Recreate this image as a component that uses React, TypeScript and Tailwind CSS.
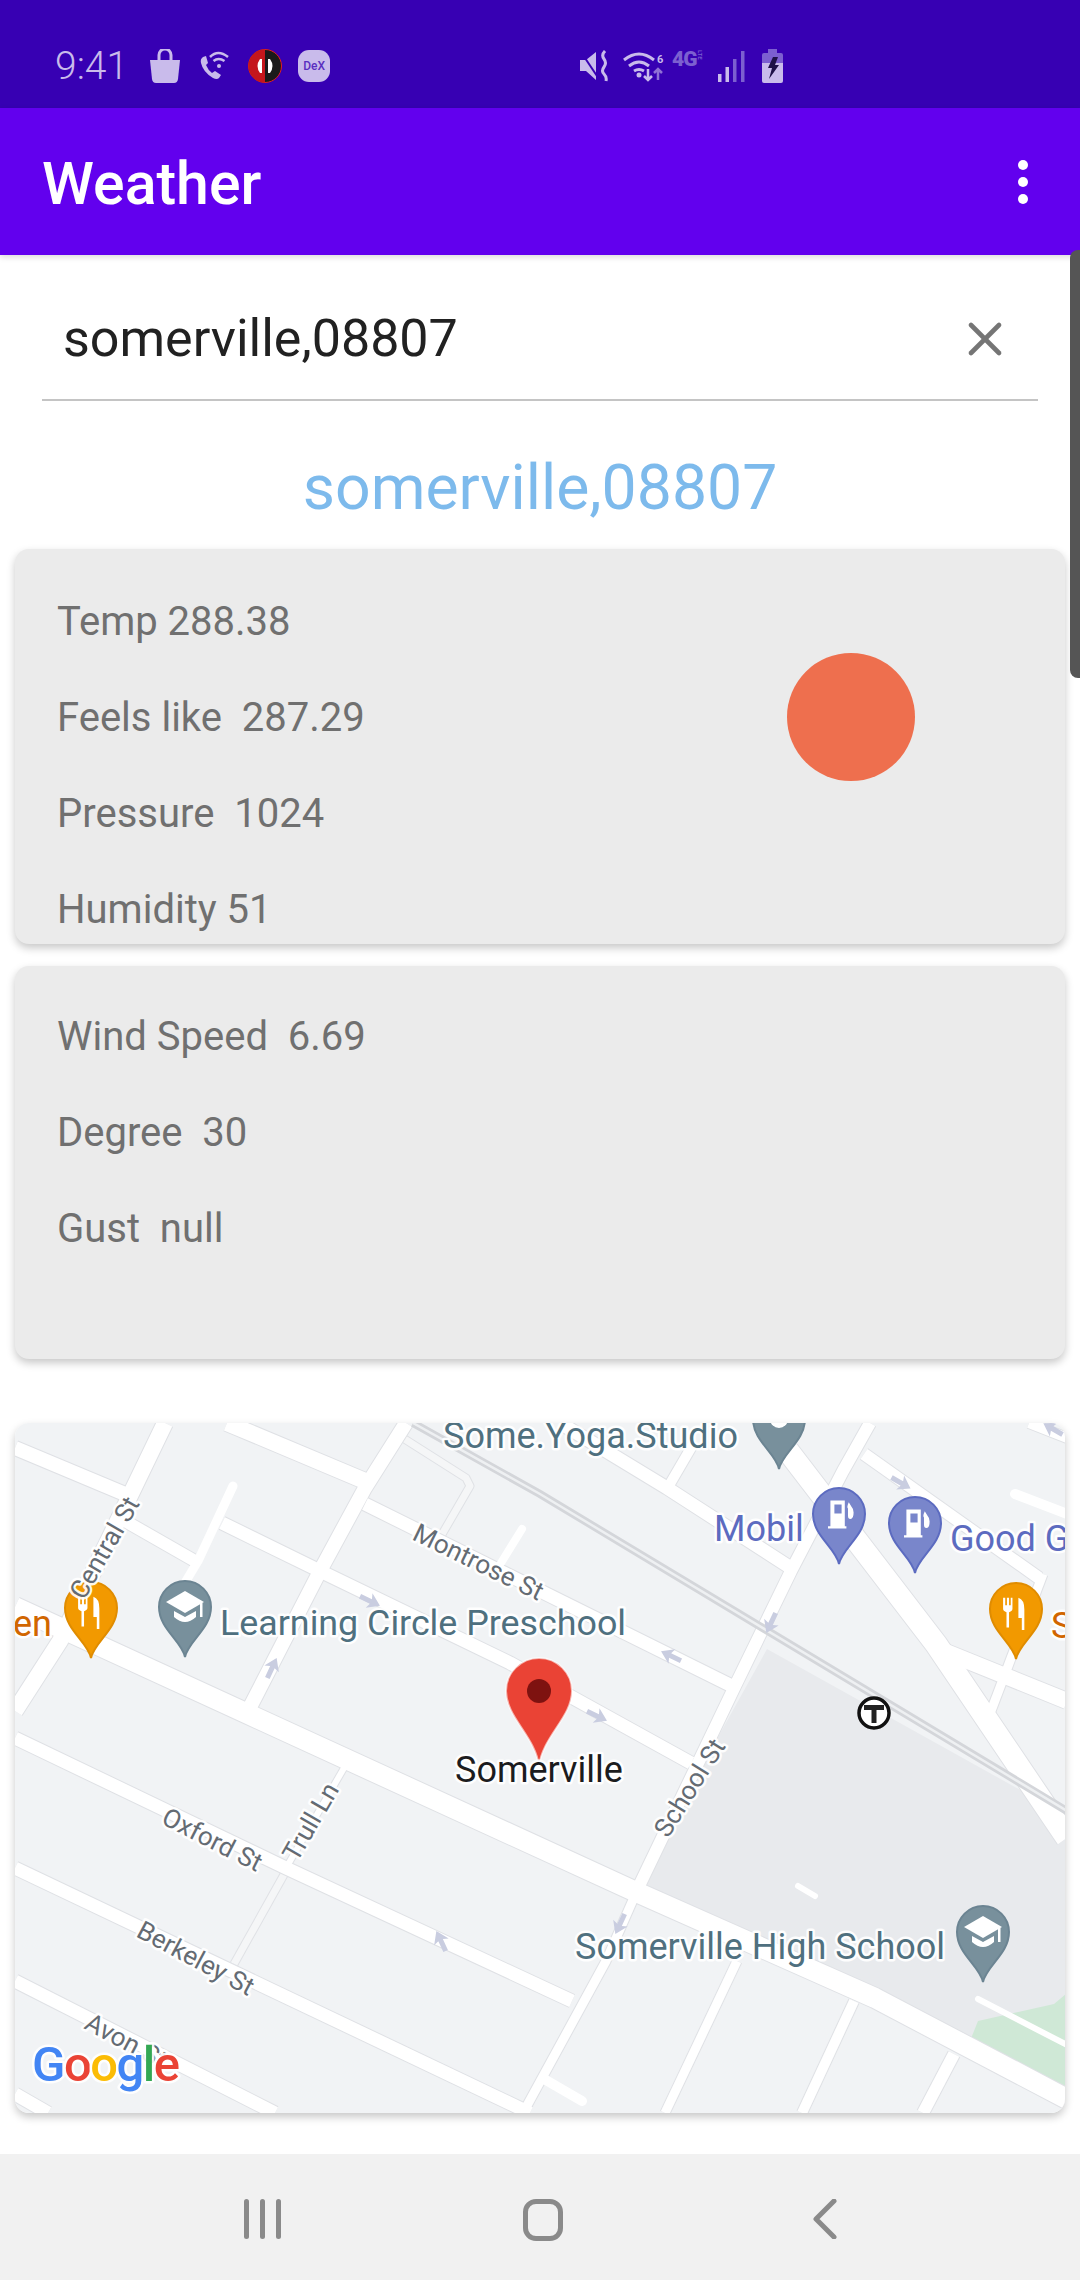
import { X } from 'lucide-react'

const halo = 'fill-current [paint-order:stroke] stroke-white/90 [stroke-width:5px] [stroke-linejoin:round]'

// [width, points] in page coordinates
const roads: [number, string][] = [
  [14, '15,1447 125,1493'],
  [12, '125,1520 195,1560'],
  [16, '165,1422 60,1640 15,1710'],
  [13, '222,1522 320,1570 510,1662 691,1762'],
  [16, '227,1422 365,1480'],
  [13, '365,1503 736,1687'],
  [13, '560,1422 667,1487 791,1567'],
  [14, '406,1422 365,1487 320,1570 248,1710'],
  [6, '344,1767 286,1867'],
  [12, '870,1422 843,1470 791,1570 736,1683 640,1883'],
  [9, '640,1883 606,1960 523,2112'],
  [13, '15,1737 286,1867 572,2000'],
  [13, '15,1867 530,2112'],
  [13, '15,1980 275,2112'],
  [13, '15,2093 48,2112'],
  [20, '15,1606 248,1713 634,1890 875,1997 1067,2098'],
  [10, '854,2000 802,2112'],
  [12, '954,2053 923,2112'],
  [9, '737,1960 665,2112'],
  [22, '788,1450 936,1643 1067,1837'],
  [16, '936,1647 1067,1700'],
  [12, '864,1453 1039,1577'],
  [9, '1043,1573 991,1710'],
  [10, '667,1488 695,1440'],
  [10, '1029,1422 1067,1437'],
]

const stubs: [number, string][] = [
  [9, '233,1485 198,1560 186,1580'],
  [8, '501,1562 522,1528'],
  [10, '544,2078 582,2100'],
  [10, '1015,1493 1067,1513'],
  [6, '798,1885 815,1895'],
  [6, '978,1998 1067,2044'],
]

// service paths: outlined, barely lighter than the ground
const paths: string[] = ['403,1437 466,1477 470,1485 441,1535', '286,1870 234,1963']

// [x, y, angle]
const arrows: [number, number, number][] = [
  [272, 1667, 25],
  [370, 1600, 115],
  [901, 1482, 120],
  [771, 1622, 205],
  [671, 1655, 295],
  [597, 1715, 115],
  [1053, 1428, 300],
  [620, 1923, 205],
  [441, 1940, 335],
]

const streets: [string, number, number, number][] = [
  ['Central St', 84, 1600, -60],
  ['Montrose St', 411, 1538, 26],
  ['Oxford St', 160, 1822, 27],
  ['Trull Ln', 297, 1862, -60],
  ['School St', 668, 1838, -58],
  ['Berkeley St', 135, 1935, 28],
  ['Avon St', 83, 2027, 28],
]

function Pin({ x, tip, color, edge, children }: { x: number; tip: number; color: string; edge: string; children: React.ReactNode }) {
  return (
    <g transform={`translate(${x} ${tip})`}>
      <path d="M0 0C-3-16-26-28-26-50A26 26 0 1 1 26-50C26-28 3-16 0 0Z" fill={color} stroke={edge} strokeWidth="2" />
      {children}
    </g>
  )
}

function SchoolGlyph() {
  return (
    <g fill="#fff">
      <path d="M0-66L19-55 0-44-19-55Z" />
      <path d="M-11-46L0-40 11-46V-40Q0-30-11-40Z" />
      <rect x="15" y="-54" width="2.5" height="14" />
    </g>
  )
}

function FoodGlyph() {
  return (
    <g fill="#fff" transform="translate(-1 -46) scale(.85) translate(0 46)">
      <path d="M-14-64h2.5v9h2v-9h2.5v9h2v-9H-3v13q0 3-4 4v18h-3v-18q-4-1-4-4Z" />
      <path d="M4-64q7 2 7 14v24H8v-14H4Z" />
    </g>
  )
}

function FuelGlyph() {
  return (
    <g fill="#fff" transform="translate(1 -49) scale(.8) translate(0 50)">
      <path fillRule="evenodd" d="M-12-68H6v32h2v3h-23v-3h3ZM-7-63v11H2v-11Z" />
      <path d="M11-66l3 5q3 3 3 8 0 8-4 8-3 0-3-4v-9q-2-2 1-8Z" />
    </g>
  )
}

function MapDrawing() {
  return (
    <svg viewBox="15 1422 1050 690" className="block h-full w-full font-[Roboto,sans-serif]">
      <rect x="15" y="1422" width="1050" height="690" fill="#f1f3f5" />
      <path d="M767 1648L1067 1815V2000L968 2045 875 1997 634 1887Z" fill="#e8eaed" />
      <path d="M978 2020L1054 2003 1067 1992V2094L968 2045Z" fill="#cfe8d6" />

      <g fill="none" strokeLinejoin="round">
        {paths.map((pts) => (
          <polyline key={pts} points={pts} stroke="#dfe1e5" strokeWidth="9" />
        ))}
        {paths.map((pts) => (
          <polyline key={pts} points={pts} stroke="#f5f6f7" strokeWidth="7" />
        ))}
      </g>
      <g fill="none" strokeLinecap="butt" strokeLinejoin="round">
        {roads.map(([w, pts]) => (
          <polyline key={pts} points={pts} stroke="#dfe1e5" strokeWidth={w + 2} />
        ))}
      </g>
      <g fill="none" strokeLinecap="butt" strokeLinejoin="round">
        {roads.map(([w, pts]) => (
          <polyline key={pts} points={pts} stroke="#fff" strokeWidth={w} />
        ))}
      </g>
      <g fill="none" strokeLinecap="round" strokeLinejoin="round" stroke="#fff">
        {stubs.map(([w, pts]) => (
          <polyline key={pts} points={pts} strokeWidth={w} />
        ))}
      </g>

      <polyline points="413,1422 540,1493 1067,1810" fill="none" stroke="#d4d6da" strokeWidth="8" />
      <polyline points="413,1422 540,1493 1067,1810" fill="none" stroke="#eef0f2" strokeWidth="2.5" />

      {arrows.map(([x, y, a]) => (
        <path
          key={`${x}-${y}`}
          transform={`translate(${x} ${y}) rotate(${a})`}
          d="M0-11L8 1 2.5-1V11H-2.5V-1L-8 1Z"
          fill="#c9cde0"
        />
      ))}

      <text x="443" y="1447" fontSize="36" className={`${halo} text-[#4f707f]`}>Some.Yoga.Studio</text>
      <text x="220" y="1634" fontSize="35.800" className={`${halo} text-[#4f707f]`}>Learning Circle Preschool</text>
      <text x="575" y="1958" fontSize="36" className={`${halo} text-[#4f707f]`}>Somerville High School</text>
      <text x="714" y="1540" fontSize="36" className={`${halo} text-[#5c6bc0]`}>Mobil</text>
      <text x="950" y="1550" fontSize="36" className={`${halo} text-[#5c6bc0]`}>Good G</text>
      <text x="1051" y="1637" fontSize="36" className={`${halo} text-[#d16600]`}>S</text>
      <text x="13" y="1635" fontSize="36" className={`${halo} text-[#d16600]`}>en</text>

      <Pin x={779} tip={1468} color="#78909c" edge="#6b8492"><circle cy="-50" r="9" fill="#fff" /></Pin>
      <Pin x={839} tip={1563} color="#7986cb" edge="#5c6bc0"><FuelGlyph /></Pin>
      <Pin x={915} tip={1572} color="#7986cb" edge="#5c6bc0"><FuelGlyph /></Pin>
      <Pin x={1016} tip={1658} color="#f29900" edge="#e08c00"><FoodGlyph /></Pin>
      <Pin x={91} tip={1657} color="#f29900" edge="#e08c00"><FoodGlyph /></Pin>
      <Pin x={185} tip={1656} color="#78909c" edge="#6b8492"><SchoolGlyph /></Pin>
      <Pin x={983} tip={1981} color="#78909c" edge="#6b8492"><SchoolGlyph /></Pin>

      {/* T station */}
      <circle cx="874" cy="1712" r="15" fill="#fff" stroke="#111" strokeWidth="3.5" />
      <path d="M864 1704h20v5h-7.5v13h-5v-13H864Z" fill="#222" />

      {/* selected marker */}
      <path
        d="M539 1765C535 1735 506 1716 506 1690A33 33 0 1 1 572 1690C572 1716 543 1735 539 1765Z"
        fill="#ea4335"
        stroke="#fff"
        strokeOpacity=".6"
        strokeWidth="2"
      />
      <circle cx="539" cy="1690" r="12" fill="#7e1210" />
      <text x="455" y="1781" fontSize="36" className={`${halo} text-[#1c1c1e]`}>Somerville</text>

      {/* street names sit over the pins, the logo over the street names */}
      {streets.map(([name, x, y, a]) => (
        <text
          key={name}
          transform={`translate(${x} ${y}) rotate(${a})`}
          fontSize="26"
          className={`${halo} text-[#646b73]`}
        >
          {name}
        </text>
      ))}

      <text x="32" y="2080" fontSize="49" fontWeight="500" letterSpacing="-1.500" className="[paint-order:stroke] stroke-white/90 [stroke-width:5px] [stroke-linejoin:round]">
        <tspan fill="#4285f4">G</tspan>
        <tspan fill="#ea4335">o</tspan>
        <tspan fill="#fbbc05">o</tspan>
        <tspan fill="#4285f4">g</tspan>
        <tspan fill="#34a853">l</tspan>
        <tspan fill="#ea4335">e</tspan>
      </text>
    </svg>
  )
}

function StatusBar() {
  return (
    <div className="flex h-[108px] shrink-0 items-center bg-[#3700b3] pl-[55px] pr-[297px] pt-[24px] text-[#c9bbeb]">
      <span className="text-[39px] font-light leading-none">9:41</span>
      <svg viewBox="0 0 30 34" className="ml-[22px] h-[34px] w-[30px]" fill="currentColor">
        <path d="M0 11h30l-2 19q-.5 4-4 4H6q-3.500 0-4-4Z" />
        <path d="M9 13V6a6 6 0 0 1 12 0v7" fill="none" stroke="currentColor" strokeWidth="3" />
      </svg>
      <svg viewBox="0 0 30 30" className="ml-[19px] h-[30px] w-[30px]" fill="none" stroke="currentColor">
        <path d="M4 6q-3 2-2 6 2 9 12 15 4 2 6 0l2-3-6-4-3 2q-4-3-6-8l2-2-2-7Z" fill="currentColor" stroke="none" />
        <path d="M11 6q8-8 18 0M14.500 10q5-4 11 0" strokeWidth="2.500" />
        <circle cx="20" cy="15" r="2" fill="currentColor" stroke="none" />
      </svg>
      <svg viewBox="0 0 34 34" className="ml-[19px] h-[34px] w-[34px]">
        <circle cx="17" cy="17" r="16.500" fill="#1a1a1a" stroke="#e02020" />
        <path d="M17 .5A16.500 16.500 0 0 0 17 33.500Z" fill="#c4161c" />
        <path d="M12 10q-5 7 0 14h2V10ZM22 10q5 7 0 14h-2V10Z" fill="#fff" />
      </svg>
      <div className="ml-[16px] flex h-[32px] w-[32px] items-center justify-center rounded-[11px] bg-current">
        <span className="text-[12px] font-medium leading-none text-[#5a2fc0]">DeX</span>
      </div>

      <div className="ml-auto flex items-center">
        <svg viewBox="0 0 32 32" className="h-[32px] w-[32px]" fill="currentColor">
          <path d="M0 10h6l10-8v28L6 21H0Z" />
          <path d="M1 2L19 29" stroke="#3700b3" strokeWidth="2" />
          <path d="M25 1q-4 4-1 8t0 8 0 7 2 7M30 1" fill="none" stroke="currentColor" strokeWidth="3" />
        </svg>
        <svg viewBox="0 0 42 32" className="ml-[11px] h-[32px] w-[42px]" fill="none" stroke="currentColor">
          <path d="M1 10q15-12 30 0M6 16q10-8 20 0M11 21q5-3 10 0" strokeWidth="3" />
          <circle cx="16" cy="25" r="2.500" fill="currentColor" stroke="none" />
          <path d="M25 19v11M21 26l4 4 4-4" strokeWidth="2.500" />
          <path d="M35 30V19M31 23l4-4 4 4" strokeWidth="2.500" strokeOpacity=".6" />
          <text x="34" y="13" fontSize="11" fontWeight="700" fill="currentColor" stroke="none">6</text>
        </svg>
        <div className="ml-[7px] flex h-[32px] w-[40px] items-start">
          <span className="text-[21px] font-black leading-[18px] tracking-[-1px] text-[#7c5fd0]">4G</span>
          <span className="text-[6px] font-bold leading-[7px] text-[#7c5fd0] [writing-mode:vertical-rl]">LTE</span>
        </div>
        <svg viewBox="0 0 27 31" className="ml-[6px] h-[31px] w-[27px]">
          <rect x="0" y="23" width="3.500" height="8" fill="currentColor" />
          <rect x="7.500" y="16" width="3.500" height="15" fill="currentColor" />
          <rect x="15" y="8" width="3.500" height="23" fill="#7c5fd0" />
          <rect x="23" y="0" width="3.500" height="31" fill="#7c5fd0" />
        </svg>
        <svg viewBox="0 0 21 34" className="ml-[17px] h-[34px] w-[21px]">
          <path d="M6 0h9v4h4q2 0 2 2v8H0V6q0-2 2-2h4Z" fill="#7c5fd0" />
          <path d="M0 14h21v18q0 2-2 2H2q-2 0-2-2Z" fill="currentColor" />
          <path d="M11 8h5l-3 8h4L7 30l3-11H6Z" fill="#1f1147" />
        </svg>
      </div>
    </div>
  )
}

function Stat({ children }: { children: React.ReactNode }) {
  return <p className="h-[96px] whitespace-pre text-[40px] leading-[96px] text-[#707070]">{children}</p>
}

export default function App() {
  return (
    <div className="relative flex h-[2280px] w-[1080px] flex-col overflow-hidden bg-white font-[Roboto,sans-serif]">
      <StatusBar />

      <header className="z-10 flex h-[147px] shrink-0 items-center justify-between bg-[#6200ee] pl-[42px] pr-[52px] shadow-[0_2px_6px_rgba(0,0,0,0.15)]">
        <h1 className="pt-[3px] text-[59px] font-medium leading-none text-white">Weather</h1>
        <div className="flex flex-col gap-[7px]">
          <span className="h-[10px] w-[10px] rounded-full bg-white" />
          <span className="h-[10px] w-[10px] rounded-full bg-white" />
          <span className="h-[10px] w-[10px] rounded-full bg-white" />
        </div>
      </header>

      <div className="mx-[42px] flex h-[146px] shrink-0 items-center justify-between border-b-2 border-[#c4c4c4] pl-[21px] pr-[25px] pt-[23px]">
        <span className="text-[52px] leading-none text-[#212121]">somerville,08807</span>
        <X className="h-[56px] w-[56px] text-[#757575]" strokeWidth={2} />
      </div>

      <h2 className="mt-[48px] text-center text-[62.500px] leading-[78px] text-[#7dbaec]">somerville,08807</h2>

      <section className="mx-[15px] mt-[22px] flex h-[395px] shrink-0 items-start justify-between overflow-hidden rounded-[14px] bg-[#ebebeb] pl-[42px] pr-[150px] pt-[25px] shadow-[0_4px_8px_rgba(0,0,0,0.22)]">
        <div>
          <Stat>Temp 288.38</Stat>
          <Stat>Feels like  287.29</Stat>
          <Stat>Pressure  1024</Stat>
          <Stat>Humidity 51</Stat>
        </div>
        <div className="mt-[79px] h-[128px] w-[128px] rounded-full bg-[#ee6f4e]" />
      </section>

      <section className="mx-[15px] mt-[22px] h-[393px] shrink-0 rounded-[14px] bg-[#ebebeb] pl-[42px] pt-[23px] shadow-[0_4px_8px_rgba(0,0,0,0.22)]">
        <Stat>Wind Speed  6.69</Stat>
        <Stat>Degree  30</Stat>
        <Stat>Gust  null</Stat>
      </section>

      <section className="mx-[15px] mt-[64px] h-[690px] shrink-0 overflow-hidden rounded-[14px] shadow-[0_4px_8px_rgba(0,0,0,0.22)]">
        <MapDrawing />
      </section>

      <nav className="mt-auto flex h-[126px] shrink-0 items-start bg-[#f1f1f1] pt-[45px] text-[#8a8a8a]">
        <div className="ml-[244px] flex h-[40px] w-[37px] justify-between">
          <span className="w-[5px] rounded-full bg-current" />
          <span className="w-[5px] rounded-full bg-current" />
          <span className="w-[5px] rounded-full bg-current" />
        </div>
        <div className="ml-[242px] h-[42px] w-[40px] rounded-[13px] border-[5px] border-current" />
        <svg viewBox="0 0 24 40" className="ml-[250px] h-[40px] w-[24px]" fill="none" stroke="currentColor" strokeWidth="5" strokeLinecap="round" strokeLinejoin="round">
          <path d="M21 2L3 20l18 18" />
        </svg>
      </nav>

      {/* scroll indicator */}
      <div className="absolute right-0 top-[250px] z-20 h-[428px] w-[10px] rounded-l-[8px] bg-[#555]" />
    </div>
  )
}
